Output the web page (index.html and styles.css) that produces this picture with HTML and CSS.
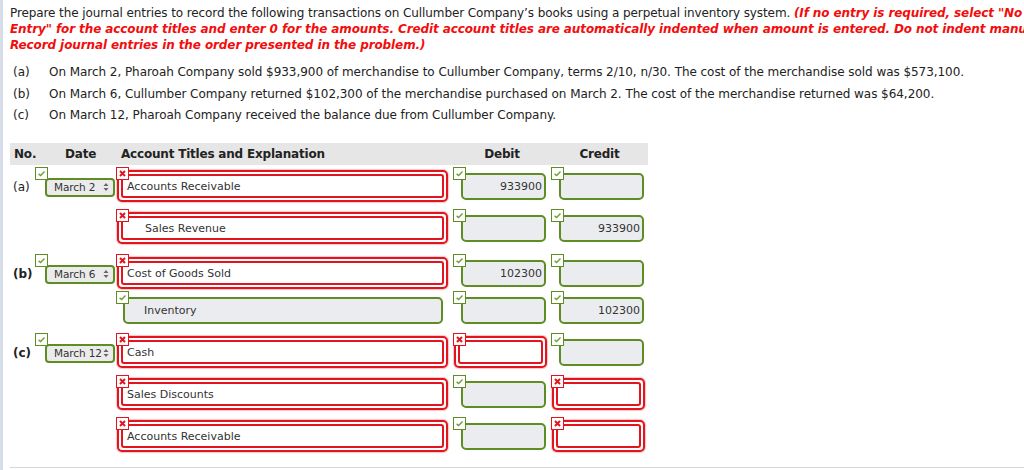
FILE: index.html
```html
<!DOCTYPE html>
<html lang="en">
<head>
  <meta charset="UTF-8"/>
  <title>Journal Entries</title>
  <link rel="stylesheet" href="styles.css">
</head>
<body>
  <!-- icon symbols -->
  <svg class="defs" width="0" height="0">
    <symbol id="ok" viewBox="0 0 13 13">
      <rect x="0.5" y="0.5" width="12" height="12" fill="#fff" stroke="#5e8d24"/>
      <path d="M3.6 6.9 L5.6 8.5 L9.5 4.6" fill="none" stroke="#6f9e33" stroke-width="1.4"/>
    </symbol>
    <symbol id="bad" viewBox="0 0 13 13">
      <rect x="0.5" y="0.5" width="12" height="12" fill="#fff" stroke="#e3141d"/>
      <path d="M4 4 L9 9 M9 4 L4 9" stroke="#e3141d" stroke-width="2"/>
    </symbol>
    <symbol id="updown" viewBox="0 0 6 10">
      <path d="M0.5 4 L3 1 L5.5 4 Z M0.5 6 L3 9 L5.5 6 Z" fill="#666"/>
    </symbol>
  </svg>

  <div class="page">
    <p class="intro">Prepare the journal entries to record the following transactions on Cullumber Company’s books using a perpetual inventory system. <span class="hint">(If no entry is required, select "No<br>Entry" for the account titles and enter 0 for the amounts. Credit account titles are automatically indented when amount is entered. Do not indent manually.<br>Record journal entries in the order presented in the problem.)</span></p>

    <div class="txns">
      <div class="txn"><span class="key">(a)</span><span>On March 2, Pharoah Company sold $933,900 of merchandise to Cullumber Company, terms 2/10, n/30. The cost of the merchandise sold was $573,100.</span></div>
      <div class="txn"><span class="key">(b)</span><span>On March 6, Cullumber Company returned $102,300 of the merchandise purchased on March 2. The cost of the merchandise returned was $64,200.</span></div>
      <div class="txn"><span class="key">(c)</span><span>On March 12, Pharoah Company received the balance due from Cullumber Company.</span></div>
    </div>

    <div class="journal">
      <div class="jrow head">
        <div>No.</div>
        <div class="h-date">Date</div>
        <div class="h-acct">Account Titles and Explanation</div>
        <div class="h-amt">Debit</div>
        <div class="h-amt">Credit</div>
      </div>

      <!-- (a) -->
      <div class="jrow">
        <div class="no">(a)</div>
        <div class="cell"><svg class="mark"><use href="#ok"/></svg><div class="sel">March 2 <svg class="arr"><use href="#updown"/></svg></div></div>
        <div class="cell"><svg class="mark"><use href="#bad"/></svg><div class="bad acct"><div class="inp">Accounts Receivable</div></div></div>
        <div class="cell"><svg class="mark"><use href="#ok"/></svg><div class="good amt">933900</div></div>
        <div class="cell"><svg class="mark"><use href="#ok"/></svg><div class="good amt"></div></div>
      </div>
      <div class="jrow gap">
        <div></div>
        <div></div>
        <div class="cell"><svg class="mark"><use href="#bad"/></svg><div class="bad acct"><div class="inp indent">Sales Revenue</div></div></div>
        <div class="cell"><svg class="mark"><use href="#ok"/></svg><div class="good amt"></div></div>
        <div class="cell"><svg class="mark"><use href="#ok"/></svg><div class="good amt">933900</div></div>
      </div>

      <!-- (b) -->
      <div class="jrow tight">
        <div class="no strong">(b)</div>
        <div class="cell"><svg class="mark"><use href="#ok"/></svg><div class="sel">March 6 <svg class="arr"><use href="#updown"/></svg></div></div>
        <div class="cell"><svg class="mark"><use href="#bad"/></svg><div class="bad acct"><div class="inp">Cost of Goods Sold</div></div></div>
        <div class="cell"><svg class="mark"><use href="#ok"/></svg><div class="good amt">102300</div></div>
        <div class="cell"><svg class="mark"><use href="#ok"/></svg><div class="good amt"></div></div>
      </div>
      <div class="jrow">
        <div></div>
        <div></div>
        <div class="cell"><svg class="mark"><use href="#ok"/></svg><div class="good acct indent">Inventory</div></div>
        <div class="cell"><svg class="mark"><use href="#ok"/></svg><div class="good amt"></div></div>
        <div class="cell"><svg class="mark"><use href="#ok"/></svg><div class="good amt">102300</div></div>
      </div>

      <!-- (c) -->
      <div class="jrow">
        <div class="no strong">(c)</div>
        <div class="cell"><svg class="mark"><use href="#ok"/></svg><div class="sel">March 12 <svg class="arr"><use href="#updown"/></svg></div></div>
        <div class="cell"><svg class="mark"><use href="#bad"/></svg><div class="bad acct"><div class="inp">Cash</div></div></div>
        <div class="cell"><svg class="mark"><use href="#bad"/></svg><div class="bad amt"><div class="inp"></div></div></div>
        <div class="cell"><svg class="mark"><use href="#ok"/></svg><div class="good amt"></div></div>
      </div>
      <div class="jrow">
        <div></div>
        <div></div>
        <div class="cell"><svg class="mark"><use href="#bad"/></svg><div class="bad acct"><div class="inp">Sales Discounts</div></div></div>
        <div class="cell"><svg class="mark"><use href="#ok"/></svg><div class="good amt"></div></div>
        <div class="cell"><svg class="mark"><use href="#bad"/></svg><div class="bad amt"><div class="inp"></div></div></div>
      </div>
      <div class="jrow">
        <div></div>
        <div></div>
        <div class="cell"><svg class="mark"><use href="#bad"/></svg><div class="bad acct"><div class="inp">Accounts Receivable</div></div></div>
        <div class="cell"><svg class="mark"><use href="#ok"/></svg><div class="good amt"></div></div>
        <div class="cell"><svg class="mark"><use href="#bad"/></svg><div class="bad amt"><div class="inp"></div></div></div>
      </div>
    </div>

    <div class="rule"></div>
  </div>
</body>
</html>
```

FILE: styles.css
```css
* { box-sizing: border-box; margin: 0; padding: 0; }
body {
  font-family: "DejaVu Sans", Verdana, sans-serif;
  color: #222;
  background: #fff;
  overflow: hidden;
}
.defs { position: absolute; width: 0; height: 0; }

.page {
  border-left: 3px solid #d6dce8;
  min-height: 100vh;
  padding-left: 7px;
}

/* instructions */
.intro {
  padding-top: 5px;
  font-size: 12px;
  line-height: 16px;
  letter-spacing: -0.1px;
  white-space: nowrap;
}
.hint {
  color: #f20d0d;
  font-weight: bold;
  font-style: italic;
}

.txns {
  margin-top: 9px;
  font-size: 12px;
  letter-spacing: -0.05px;
}
.txn {
  display: flex;
  line-height: 21.5px;
  white-space: nowrap;
  padding-left: 3px;
}
.txn .key { width: 36px; }

/* journal grid */
.journal { width: 638px; margin-top: 16px; }
.jrow {
  display: grid;
  grid-template-columns: 25px 81px 337px 98px 97px;
  height: 42px;
}
.jrow.gap { height: 45px; }
.jrow.tight { height: 37px; }
.jrow.head {
  height: 22px;
  margin-bottom: 2px;
  background: #e6e6e6;
  font-size: 12px;
  font-weight: bold;
  line-height: 22px;
  padding-left: 4px;
  letter-spacing: -0.2px;
}
.head .h-date { padding-left: 26px; }
.head .h-acct { padding-left: 1px; }
.head .h-amt { text-align: center; padding-right: 8px; }

.no {
  font-size: 12px;
  line-height: 16px;
  padding-top: 12px;
  padding-left: 3px;
}
.no.strong { font-weight: bold; }

.cell { position: relative; padding-top: 3px; }
.mark {
  position: absolute;
  left: 0;
  top: 0;
  width: 13px;
  height: 13px;
  z-index: 2;
}

/* date dropdown */
.sel {
  display: flex;
  align-items: center;
  justify-content: space-between;
  width: 70px;
  height: 19px;
  margin: 8px 0 0 10px;
  padding: 0 4px 0 7px;
  border: 2px solid #5e8d24;
  border-radius: 4px;
  background: #ebebeb;
  font-size: 10.5px;
  letter-spacing: -0.1px;
  color: #333;
  white-space: nowrap;
}
.arr { width: 6px; height: 10px; flex: none; }

/* incorrect field: doubled red outline */
.bad {
  height: 32px;
  margin-left: 1px;
  padding: 2px;
  border: 2px solid #e3141d;
  border-radius: 5px;
  background: #fff;
  box-shadow: 0 0 1px 1px rgba(227, 20, 29, 0.25);
}
.bad.acct { width: 331px; }
.bad.amt { width: 93px; }
.inp {
  height: 100%;
  border: 2px solid #e3141d;
  border-radius: 3px;
  padding-left: 4px;
  font-size: 11px;
  line-height: 22px;
  color: #333;
}
.inp.indent { padding-left: 22px; }

/* correct field */
.good {
  height: 27px;
  margin: 3px 0 0 8px;
  border: 2px solid #5e8d24;
  border-radius: 5px;
  background: #ebecef;
  font-size: 11px;
  line-height: 24px;
  color: #333;
}
.good.acct { width: 320px; margin-left: 7px; }
.good.acct.indent { padding-left: 19px; }
.good.amt { width: 85px; text-align: right; padding-right: 2px; }

.rule {
  margin-top: 8px;
  border-top: 1px solid #d3d6dd;
}
```
